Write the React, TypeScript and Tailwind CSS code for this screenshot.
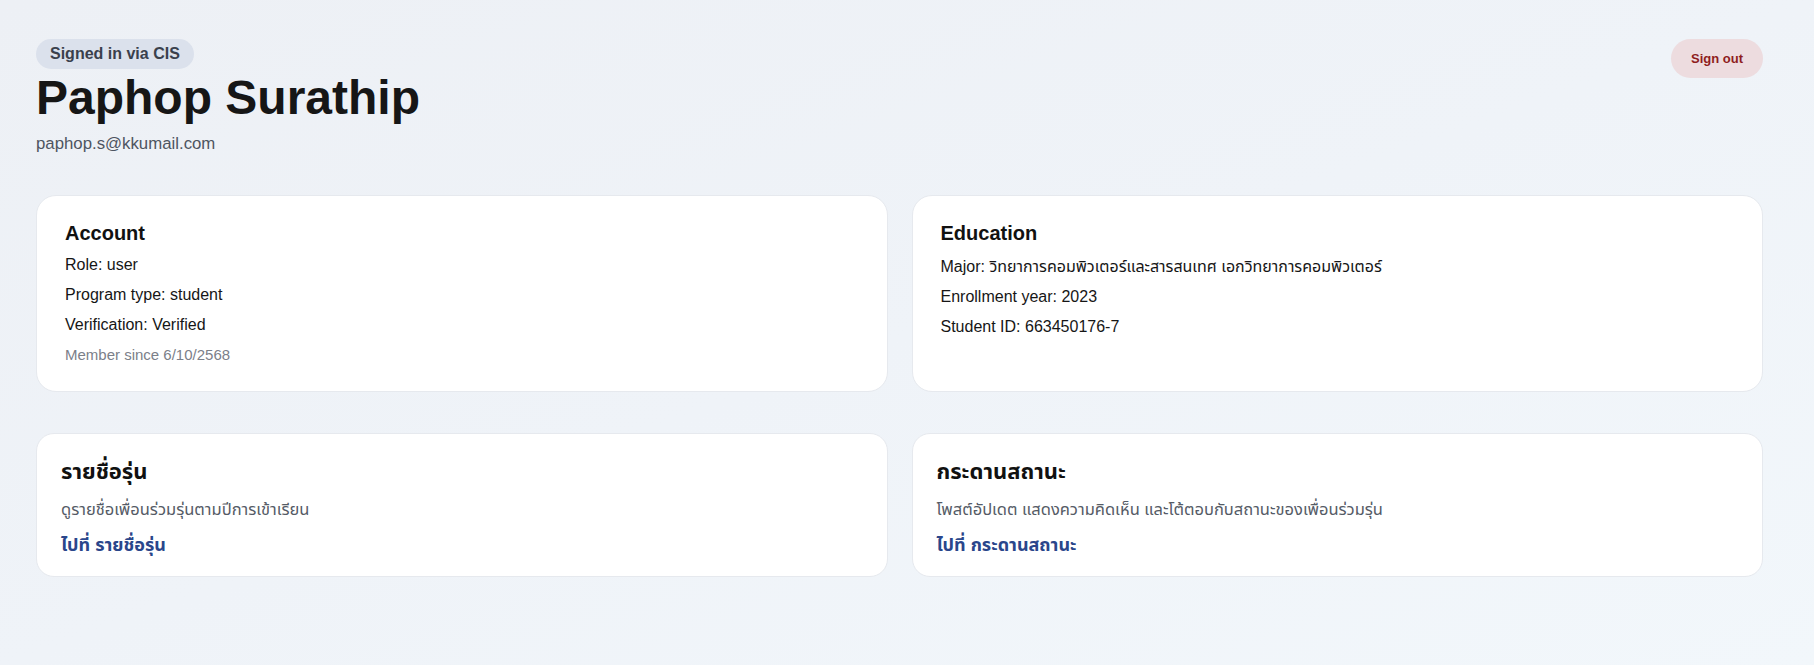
const accountRows = ["Role: user", "Program type: student", "Verification: Verified"]

const educationRows = [
    "Major: วิทยาการคอมพิวเตอร์และสารสนเทศ เอกวิทยาการคอมพิวเตอร์",
    "Enrollment year: 2023",
    "Student ID: 663450176-7",
]

const links = [
    {
        title: "รายชื่อรุ่น",
        desc: "ดูรายชื่อเพื่อนร่วมรุ่นตามปีการเข้าเรียน",
        cta: "ไปที่ รายชื่อรุ่น",
    },
    {
        title: "กระดานสถานะ",
        desc: "โพสต์อัปเดต แสดงความคิดเห็น และโต้ตอบกับสถานะของเพื่อนร่วมรุ่น",
        cta: "ไปที่ กระดานสถานะ",
    },
]

const App = () => {
    return (
        <div className="min-h-screen bg-linear-to-br from-[#edf0f5] via-[#eff3f8] to-[#f2f7fb] pl-9 pr-[51px] pt-[39px] pb-10 font-['Liberation_Sans','Noto_Sans_Thai','Noto_Sans',sans-serif] text-[#111]">
            <div className="flex items-start justify-between">
                <div>
                    <span className="inline-block rounded-full bg-[#dbe1ec] px-3.5 py-[5px] text-base leading-5 font-bold text-[#3a404c]">
                        Signed in via CIS
                    </span>
                    <h1 className="mt-[5px] text-5xl leading-none font-bold text-[#161616]">Paphop Surathip</h1>
                    <p className="mt-[10px] text-[16.8px] leading-6 text-[#4e5561]">paphop.s@kkumail.com</p>
                </div>
                <button className="rounded-full bg-[#eddcdf] px-5 py-[10px] text-[13px] leading-[19px] font-bold text-[#8f1d1d]">
                    Sign out
                </button>
            </div>

            <div className="mt-[39px] grid grid-cols-2 gap-6">
                <div className="rounded-[20px] border border-[#e6e9ee] bg-white pt-[23px] pb-6 pl-7 pr-6">
                    <h2 className="text-xl leading-7 font-bold">Account</h2>
                    {accountRows.map((row) => (
                        <p key={row} className="mt-1.5 text-base leading-6 text-[#161616]">{row}</p>
                    ))}
                    <p className="mt-1.5 text-[15px] leading-6 text-[#7b8089]">Member since 6/10/2568</p>
                </div>
                <div className="rounded-[20px] border border-[#e6e9ee] bg-white pt-[23px] pb-6 pl-7 pr-6">
                    <h2 className="text-xl leading-7 font-bold">Education</h2>
                    {educationRows.map((row, i) => (
                        <p key={row} className={i === 0 ? "mt-2 text-base leading-6 text-[#161616]" : "mt-1.5 text-base leading-6 text-[#161616]"}>{row}</p>
                    ))}
                </div>
            </div>

            <div className="mt-[41px] grid grid-cols-2 gap-6">
                {links.map((l) => (
                    <div key={l.title} className="rounded-[18px] border border-[#e6e9ee] bg-white px-6 pt-6 pb-[19px]">
                        <h2 className="text-[22px] leading-7 font-bold">{l.title}</h2>
                        <p className="mt-[11px] text-[16.5px] leading-6 text-[#555b66]">{l.desc}</p>
                        <a href="#" className="mt-3 block text-lg leading-6 font-bold text-[#2a468b]">
                            {l.cta}
                        </a>
                    </div>
                ))}
            </div>
        </div>
    )
}

export default App
